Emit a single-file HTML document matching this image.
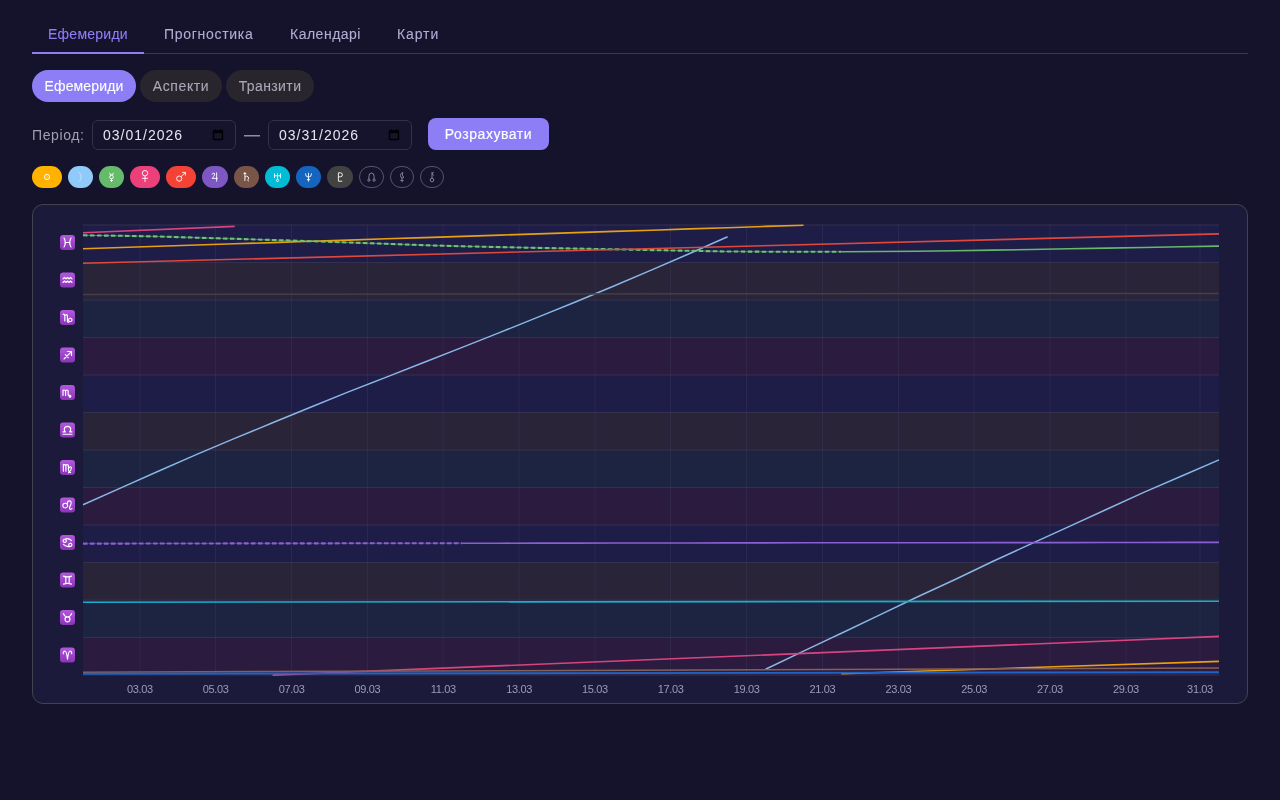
<!DOCTYPE html>
<html><head><meta charset="utf-8"><style>
html,body{margin:0;padding:0;background:#15132b;width:1280px;height:800px;overflow:hidden;font-family:"Liberation Sans",sans-serif;}
.a{position:absolute;white-space:nowrap;}
.tab,.pill,.a,.inp{will-change:transform}
.tab{position:absolute;top:26px;font-size:14px;line-height:16px;color:#b0aed2;white-space:nowrap;-webkit-text-stroke:0.1px currentColor}
.pill{position:absolute;top:70px;height:32px;border-radius:16px;font-size:14px;line-height:32px;text-align:center;color:#aaa8b6;background:#28252d;white-space:nowrap;-webkit-text-stroke:0.1px currentColor}
.inp{position:absolute;top:120px;width:142px;height:28px;border:1px solid #33304a;border-radius:6px;background:#16142d;}
.inp .t{position:absolute;left:10px;top:6px;font-size:14px;line-height:16px;color:#e6e4ee;letter-spacing:1px;white-space:nowrap}
.inp .cal{position:absolute;left:119px;top:7px;}
</style></head><body>
<div class="tab" style="left:48px;color:#8d7ef6;letter-spacing:0.25px">Ефемериди</div>
<div class="tab" style="left:164px;letter-spacing:0.7px">Прогностика</div>
<div class="tab" style="left:290px;letter-spacing:0.5px">Календарі</div>
<div class="tab" style="left:397px;letter-spacing:0.9px">Карти</div>
<div class="a" style="left:32px;top:53px;width:1216px;height:1px;background:#3b3950"></div>
<div class="a" style="left:32px;top:52px;width:112px;height:2px;background:#8d7ef6"></div>
<div class="pill" style="left:32px;width:104px;background:#8d7ef6;color:#fff;letter-spacing:0.15px">Ефемериди</div>
<div class="pill" style="left:140px;width:82px;letter-spacing:0.6px">Аспекти</div>
<div class="pill" style="left:226px;width:88px;letter-spacing:0.4px">Транзити</div>
<div class="a" style="left:32px;top:127px;font-size:14px;line-height:16px;color:#a29eb4;letter-spacing:0.6px">Період:</div>
<div class="inp" style="left:92px"><div class="t">03/01/2026</div><svg class="cal" width="12" height="13" viewBox="0 0 12 13"><rect x="1.5" y="3" width="9" height="8.5" rx="0.8" fill="none" stroke="#000" stroke-width="1.4"/><rect x="1" y="2.5" width="10" height="2.6" fill="#000"/><rect x="2.6" y="1" width="1.2" height="2.5" fill="#000"/><rect x="8.2" y="1" width="1.2" height="2.5" fill="#000"/></svg></div>
<div class="inp" style="left:268px"><div class="t">03/31/2026</div><svg class="cal" width="12" height="13" viewBox="0 0 12 13"><rect x="1.5" y="3" width="9" height="8.5" rx="0.8" fill="none" stroke="#000" stroke-width="1.4"/><rect x="1" y="2.5" width="10" height="2.6" fill="#000"/><rect x="2.6" y="1" width="1.2" height="2.5" fill="#000"/><rect x="8.2" y="1" width="1.2" height="2.5" fill="#000"/></svg></div>
<div class="a" style="left:428px;top:118px;width:121px;height:32px;border-radius:8px;background:#8d7ef6;color:#fff;font-size:14px;line-height:32px;text-align:center;letter-spacing:0.55px;-webkit-text-stroke:0.15px #fff">Розрахувати</div>
<div class="a" style="left:32px;top:204px;width:1214px;height:498px;border:1px solid #45424f;border-radius:11px;background:#1c1a3b"></div>
<svg width="1280" height="800" viewBox="0 0 1280 800" style="position:absolute;left:0;top:0;will-change:transform">
<defs><linearGradient id="zg" x1="0" y1="0" x2="0" y2="1"><stop offset="0" stop-color="#b258dc"/><stop offset="1" stop-color="#8a34b8"/></linearGradient></defs>
<rect x="32" y="166" width="30" height="22" rx="11" fill="#ffb300"/><g transform="translate(47.0,177)" stroke="#fff" stroke-width="0.9"><circle cx="0" cy="0" r="2.6" fill="none"/><circle cx="0" cy="0" r="0.6" fill="#fff" stroke="none"/></g><rect x="68" y="166" width="25" height="22" rx="11" fill="#90caf9"/><g transform="translate(80.5,177)" stroke="#fff" stroke-width="0.9"><path d="M-1.2,-4.6 Q2.6,0 -1.2,4.6" fill="none" stroke="#c8e2fb"/></g><rect x="99" y="166" width="25" height="22" rx="11" fill="#66bb6a"/><g transform="translate(111.5,177)" stroke="#fff" stroke-width="0.9"><circle cx="0" cy="0" r="1.8" fill="none"/><path d="M-1.9,-4.2 Q-1.7,-2.1 0,-2.1 Q1.7,-2.1 1.9,-4.2 M0,1.8 V5 M-1.4,3.5 H1.4" fill="none"/></g><rect x="130" y="166" width="30" height="22" rx="11" fill="#ec407a"/><g transform="translate(145.0,177)" stroke="#fff" stroke-width="0.9"><circle cx="0" cy="-3.8" r="2.7" fill="none"/><path d="M0,-1.1 V5 M-3,1.3 H3" fill="none"/></g><rect x="166" y="166" width="30" height="22" rx="11" fill="#f44336"/><g transform="translate(181.0,177)" stroke="#fff" stroke-width="0.9"><circle cx="-1.8" cy="1.6" r="2.6" fill="none"/><path d="M0.1,-0.3 L4.2,-4.4 M1.3,-4.6 H4.4 V-1.5" fill="none"/></g><rect x="202" y="166" width="26" height="22" rx="11" fill="#7e57c2"/><g transform="translate(215.0,177)" stroke="#fff" stroke-width="0.9"><path d="M-3,-2.4 Q-2.4,-4.6 -0.6,-3.6 Q0.6,-2.6 -2.8,1.4 H2.8 M1.6,-4.6 V4.6" fill="none"/></g><rect x="234" y="166" width="25" height="22" rx="11" fill="#795548"/><g transform="translate(246.5,177)" stroke="#fff" stroke-width="0.9"><path d="M-1.6,-5 V4 M-3,-3.4 H-0.2 M-1.6,0.2 Q0.3,-2 1.8,0 Q2.4,1 1.6,2.6 Q1.2,3.6 1.9,4.4" fill="none"/></g><rect x="265" y="166" width="25" height="22" rx="11" fill="#00bcd4"/><g transform="translate(277.5,177)" stroke="#fff" stroke-width="0.9"><path d="M-3,-3.6 V1.2 M3,-3.6 V1.2 M-3,-1.2 H3 M0,-3.6 V2.2" fill="none"/><circle cx="0" cy="3.4" r="1.1" fill="none"/></g><rect x="296" y="166" width="25" height="22" rx="11" fill="#1565c0"/><g transform="translate(308.5,177)" stroke="#fff" stroke-width="0.9"><path d="M-3,-3.6 Q-3,0.2 0,0.2 Q3,0.2 3,-3.6 M0,-4.2 V4.6 M-1.6,2.6 H1.6" fill="none"/></g><rect x="327" y="166" width="26" height="22" rx="11" fill="#424242"/><g transform="translate(340.0,177)" stroke="#fff" stroke-width="0.9"><path d="M-1.6,-4.2 V4.2 H2.2 M-1.6,-4.2 H0.4 Q2.4,-4.2 2.4,-2.2 Q2.4,-0.2 0.4,-0.2 H-1.6" fill="none"/></g><rect x="359.5" y="166.5" width="24" height="21" rx="10.5" fill="none" stroke="#57536c" stroke-width="1"/><g transform="translate(371.5,177)" stroke="#8e8aa4" stroke-width="0.9"><path d="M-2.6,2.3 V-0.4 Q-2.7,-4 0,-4 Q2.7,-4 2.6,-0.4 V2.3" fill="none"/><circle cx="-2.6" cy="3.2" r="1.1" fill="none"/><circle cx="2.6" cy="3.2" r="1.1" fill="none"/></g><rect x="390.5" y="166.5" width="23" height="21" rx="10.5" fill="none" stroke="#57536c" stroke-width="1"/><g transform="translate(402.0,177)" stroke="#8e8aa4" stroke-width="0.9"><path d="M1.2,-4.6 Q-2.8,-3.4 -1,0.4 Q0.8,1.6 2,0.2 Q-0.6,-0.4 0.6,-4.2 M0,1 V5.2 M-1.6,3.4 H1.6" fill="none"/></g><rect x="420.5" y="166.5" width="23" height="21" rx="10.5" fill="none" stroke="#57536c" stroke-width="1"/><g transform="translate(432.0,177)" stroke="#8e8aa4" stroke-width="0.9"><path d="M0,-5 V1.2 M0,-3.4 L1.8,-4.8 M0,-3.2 L1.8,-1.6" fill="none"/><circle cx="0" cy="3" r="1.8" fill="none"/></g>
<rect x="83.0" y="225.0" width="1136.0" height="37.5" fill="#1e1d48"/><rect x="83.0" y="262.5" width="1136.0" height="37.5" fill="#2a2438"/><rect x="83.0" y="300.0" width="1136.0" height="37.5" fill="#1c2441"/><rect x="83.0" y="337.5" width="1136.0" height="37.5" fill="#2b1b3e"/><rect x="83.0" y="375.0" width="1136.0" height="37.5" fill="#1e1d48"/><rect x="83.0" y="412.5" width="1136.0" height="37.5" fill="#2a2438"/><rect x="83.0" y="450.0" width="1136.0" height="37.5" fill="#1c2441"/><rect x="83.0" y="487.5" width="1136.0" height="37.5" fill="#2b1b3e"/><rect x="83.0" y="525.0" width="1136.0" height="37.5" fill="#1e1d48"/><rect x="83.0" y="562.5" width="1136.0" height="37.5" fill="#2a2438"/><rect x="83.0" y="600.0" width="1136.0" height="37.5" fill="#1c2441"/><rect x="83.0" y="637.5" width="1136.0" height="37.5" fill="#2b1b3e"/>
<line x1="83.0" x2="1219.0" y1="225.0" y2="225.0" stroke="#34314f" stroke-width="1"/><line x1="83.0" x2="1219.0" y1="262.5" y2="262.5" stroke="#34314f" stroke-width="1"/><line x1="83.0" x2="1219.0" y1="300.0" y2="300.0" stroke="#34314f" stroke-width="1"/><line x1="83.0" x2="1219.0" y1="337.5" y2="337.5" stroke="#34314f" stroke-width="1"/><line x1="83.0" x2="1219.0" y1="375.0" y2="375.0" stroke="#34314f" stroke-width="1"/><line x1="83.0" x2="1219.0" y1="412.5" y2="412.5" stroke="#34314f" stroke-width="1"/><line x1="83.0" x2="1219.0" y1="450.0" y2="450.0" stroke="#34314f" stroke-width="1"/><line x1="83.0" x2="1219.0" y1="487.5" y2="487.5" stroke="#34314f" stroke-width="1"/><line x1="83.0" x2="1219.0" y1="525.0" y2="525.0" stroke="#34314f" stroke-width="1"/><line x1="83.0" x2="1219.0" y1="562.5" y2="562.5" stroke="#34314f" stroke-width="1"/><line x1="83.0" x2="1219.0" y1="600.0" y2="600.0" stroke="#34314f" stroke-width="1"/><line x1="83.0" x2="1219.0" y1="637.5" y2="637.5" stroke="#34314f" stroke-width="1"/><line x1="83.0" x2="1219.0" y1="675.0" y2="675.0" stroke="#34314f" stroke-width="1"/><line x1="140.0" x2="140.0" y1="225.0" y2="675.0" stroke="#3a3858" stroke-width="1" stroke-opacity="0.45"/><line x1="215.5" x2="215.5" y1="225.0" y2="675.0" stroke="#3a3858" stroke-width="1" stroke-opacity="0.45"/><line x1="291.5" x2="291.5" y1="225.0" y2="675.0" stroke="#3a3858" stroke-width="1" stroke-opacity="0.45"/><line x1="367.5" x2="367.5" y1="225.0" y2="675.0" stroke="#3a3858" stroke-width="1" stroke-opacity="0.45"/><line x1="443.0" x2="443.0" y1="225.0" y2="675.0" stroke="#3a3858" stroke-width="1" stroke-opacity="0.45"/><line x1="519.0" x2="519.0" y1="225.0" y2="675.0" stroke="#3a3858" stroke-width="1" stroke-opacity="0.45"/><line x1="595.0" x2="595.0" y1="225.0" y2="675.0" stroke="#3a3858" stroke-width="1" stroke-opacity="0.45"/><line x1="670.5" x2="670.5" y1="225.0" y2="675.0" stroke="#3a3858" stroke-width="1" stroke-opacity="0.45"/><line x1="746.5" x2="746.5" y1="225.0" y2="675.0" stroke="#3a3858" stroke-width="1" stroke-opacity="0.45"/><line x1="822.5" x2="822.5" y1="225.0" y2="675.0" stroke="#3a3858" stroke-width="1" stroke-opacity="0.45"/><line x1="898.5" x2="898.5" y1="225.0" y2="675.0" stroke="#3a3858" stroke-width="1" stroke-opacity="0.45"/><line x1="974.0" x2="974.0" y1="225.0" y2="675.0" stroke="#3a3858" stroke-width="1" stroke-opacity="0.45"/><line x1="1050.0" x2="1050.0" y1="225.0" y2="675.0" stroke="#3a3858" stroke-width="1" stroke-opacity="0.45"/><line x1="1126.0" x2="1126.0" y1="225.0" y2="675.0" stroke="#3a3858" stroke-width="1" stroke-opacity="0.45"/><line x1="1200.0" x2="1200.0" y1="225.0" y2="675.0" stroke="#3a3858" stroke-width="1" stroke-opacity="0.45"/>
<polyline points="83.0,248.8 120.9,247.5 158.8,246.3 196.8,245.0 234.7,243.8 272.6,242.6 310.5,241.3 348.4,240.1 386.4,238.8 424.3,237.6 462.2,236.4 500.1,235.1 538.0,233.9 576.0,232.6 613.9,231.4 651.8,230.2 689.7,228.9 727.6,227.7 765.5,226.4 803.5,225.2" fill="none" stroke="#e8a012" stroke-width="1.6" stroke-opacity="1" stroke-linejoin="round"/><polyline points="841.4,673.7 1219.0,661.4" fill="none" stroke="#e8a012" stroke-width="1.6" stroke-opacity="1" stroke-linejoin="round"/><polyline points="83.0,504.8 120.9,487.9 158.8,471.0 196.8,454.4 234.7,438.4 272.6,422.8 310.5,407.2 348.4,391.9 386.4,377.1 424.3,362.2 462.2,347.4 500.1,332.4 538.0,317.1 576.0,301.7 613.9,286.0 651.8,269.9 689.7,253.5 727.6,236.8" fill="none" stroke="#88b6e6" stroke-width="1.5" stroke-opacity="1" stroke-linejoin="round"/><polyline points="765.5,669.3 803.5,651.1 841.4,633.2 879.3,615.1 917.2,597.0 955.1,579.5 993.1,561.3 1031.0,543.9 1068.9,526.6 1106.8,509.3 1143.2,492.6 1181.1,476.3 1219.0,459.9" fill="none" stroke="#88b6e6" stroke-width="1.5" stroke-opacity="1" stroke-linejoin="round"/><polyline points="83.0,235.3 120.9,235.8 158.8,236.5 196.8,237.7 234.7,238.8 272.6,240.0 310.5,241.2 348.4,242.5 386.4,243.8 424.3,245.2 462.2,246.3 500.1,247.1 538.0,247.9 576.0,248.6 613.9,249.3 651.8,250.1 689.7,250.8 727.6,251.5 765.5,251.7 803.5,251.7 841.4,251.7" fill="none" stroke="#6cc46f" stroke-width="0.9" stroke-opacity="0.6" stroke-linejoin="round"/><polyline points="83.0,235.3 120.9,235.8 158.8,236.5 196.8,237.7 234.7,238.8 272.6,240.0 310.5,241.2 348.4,242.5 386.4,243.8 424.3,245.2 462.2,246.3 500.1,247.1 538.0,247.9 576.0,248.6 613.9,249.3 651.8,250.1 689.7,250.8 727.6,251.5 765.5,251.7 803.5,251.7 841.4,251.7" fill="none" stroke="#6cc46f" stroke-width="2.1" stroke-opacity="1" stroke-linejoin="round" stroke-dasharray="4.5 2.5"/><polyline points="841.4,251.7 879.3,251.5 917.2,251.3 955.1,250.8 993.1,250.1 1031.0,249.5 1068.9,248.8 1106.8,248.1 1143.2,247.5 1181.1,246.8 1219.0,246.1" fill="none" stroke="#66b86a" stroke-width="1.6" stroke-opacity="1" stroke-linejoin="round"/><polyline points="83.0,232.7 234.7,226.4" fill="none" stroke="#d84482" stroke-width="1.6" stroke-opacity="1" stroke-linejoin="round"/><polyline points="272.6,675.1 1219.0,636.4" fill="none" stroke="#d84482" stroke-width="1.6" stroke-opacity="1" stroke-linejoin="round"/><polyline points="83.0,263.3 1219.0,233.9" fill="none" stroke="#e0483c" stroke-width="1.6" stroke-opacity="1" stroke-linejoin="round"/><polyline points="83.0,543.6 120.9,543.6 158.8,543.5 196.8,543.5 234.7,543.4 272.6,543.4 310.5,543.4 348.4,543.3 386.4,543.3 424.3,543.2 462.2,543.2" fill="none" stroke="#8a5fd0" stroke-width="0.9" stroke-opacity="0.6" stroke-linejoin="round"/><polyline points="83.0,543.6 120.9,543.6 158.8,543.5 196.8,543.5 234.7,543.4 272.6,543.4 310.5,543.4 348.4,543.3 386.4,543.3 424.3,543.2 462.2,543.2" fill="none" stroke="#8a5fd0" stroke-width="2.1" stroke-opacity="1" stroke-linejoin="round" stroke-dasharray="4.5 2.5"/><polyline points="462.2,543.2 500.1,543.2 538.0,543.1 576.0,543.1 613.9,543.0 651.8,543.0 689.7,543.0 727.6,542.9 765.5,542.9 803.5,542.8 841.4,542.8 879.3,542.8 917.2,542.7 955.1,542.7 993.1,542.6 1031.0,542.6 1068.9,542.6 1106.8,542.5 1143.2,542.5 1181.1,542.4 1219.0,542.4" fill="none" stroke="#8a5fd0" stroke-width="1.6" stroke-opacity="1" stroke-linejoin="round"/><polyline points="83.0,672.2 1219.0,668.1" fill="none" stroke="#84605a" stroke-width="1.5" stroke-opacity="1" stroke-linejoin="round"/><polyline points="83.0,602.2 1219.0,601.2" fill="none" stroke="#18b0c8" stroke-width="1.6" stroke-opacity="1" stroke-linejoin="round"/><polyline points="83.0,673.8 1219.0,672.3" fill="none" stroke="#1f64c4" stroke-width="1.9" stroke-opacity="1" stroke-linejoin="round"/><polyline points="83.0,294.4 1219.0,293.4" fill="none" stroke="#433e4a" stroke-width="1.5" stroke-opacity="1" stroke-linejoin="round"/>
<g font-family="Liberation Sans" font-size="11" fill="#9d9ab8" letter-spacing="-0.35"><text x="139.9" y="693" text-anchor="middle">03.03</text><text x="215.7" y="693" text-anchor="middle">05.03</text><text x="291.6" y="693" text-anchor="middle">07.03</text><text x="367.4" y="693" text-anchor="middle">09.03</text><text x="443.2" y="693" text-anchor="middle">11.03</text><text x="519.1" y="693" text-anchor="middle">13.03</text><text x="594.9" y="693" text-anchor="middle">15.03</text><text x="670.7" y="693" text-anchor="middle">17.03</text><text x="746.6" y="693" text-anchor="middle">19.03</text><text x="822.4" y="693" text-anchor="middle">21.03</text><text x="898.3" y="693" text-anchor="middle">23.03</text><text x="974.1" y="693" text-anchor="middle">25.03</text><text x="1049.9" y="693" text-anchor="middle">27.03</text><text x="1125.8" y="693" text-anchor="middle">29.03</text><text x="1200.0" y="693" text-anchor="middle">31.03</text></g>
<g transform="translate(60,235.00)"><rect x="0" y="0" width="15" height="15" rx="3.2" fill="url(#zg)"/><path d="M4,3 Q6.6,7.5 4,12 M11,3 Q8.4,7.5 11,12 M5,7.5 H10" fill="none" stroke="#fff" stroke-width="1.15" stroke-linecap="round" stroke-linejoin="round"/></g><g transform="translate(60,272.50)"><rect x="0" y="0" width="15" height="15" rx="3.2" fill="url(#zg)"/><path d="M3,6.3 L4.5,4.8 L6,6.3 L7.5,4.8 L9,6.3 L10.5,4.8 L12,6.3 M3,10 L4.5,8.5 L6,10 L7.5,8.5 L9,10 L10.5,8.5 L12,10" fill="none" stroke="#fff" stroke-width="1.15" stroke-linecap="round" stroke-linejoin="round"/></g><g transform="translate(60,310.00)"><rect x="0" y="0" width="15" height="15" rx="3.2" fill="url(#zg)"/><path d="M3.2,4.2 Q4.6,4 4.8,5.8 V11 M4.8,6 Q6,3.6 7.4,5.6 V11 Q7.6,12.6 9,12 M10.3,8.2 A1.7,1.7 0 1,1 10.29,8.2" fill="none" stroke="#fff" stroke-width="1.15" stroke-linecap="round" stroke-linejoin="round"/></g><g transform="translate(60,347.50)"><rect x="0" y="0" width="15" height="15" rx="3.2" fill="url(#zg)"/><path d="M4,11.5 L11.2,4.3 M7.6,4 H11.5 V7.9 M5.3,7.2 L8.3,10.2" fill="none" stroke="#fff" stroke-width="1.15" stroke-linecap="round" stroke-linejoin="round"/></g><g transform="translate(60,385.00)"><rect x="0" y="0" width="15" height="15" rx="3.2" fill="url(#zg)"/><path d="M3,5 V10.5 M3,6 Q4.3,4 5.6,6 V10.5 M5.6,6 Q6.9,4 8.2,6 V10 Q8.4,11.6 10.6,11.2 M9.6,10 L11,11.2 L9.8,12.5" fill="none" stroke="#fff" stroke-width="1.15" stroke-linecap="round" stroke-linejoin="round"/></g><g transform="translate(60,422.50)"><rect x="0" y="0" width="15" height="15" rx="3.2" fill="url(#zg)"/><path d="M3,9.4 H5.4 Q3.9,8 4.3,6.2 Q4.9,3.9 7.5,3.9 Q10.1,3.9 10.7,6.2 Q11.1,8 9.6,9.4 H12 M3,11.7 H12" fill="none" stroke="#fff" stroke-width="1.15" stroke-linecap="round" stroke-linejoin="round"/></g><g transform="translate(60,460.00)"><rect x="0" y="0" width="15" height="15" rx="3.2" fill="url(#zg)"/><path d="M3.4,4.4 V11.2 M3.4,5.4 Q4.6,3.8 5.9,5.4 V11.2 M5.9,5.4 Q7.1,3.8 8.4,5.4 V9.6 Q8.6,12 10.6,12.6 M8.4,8.8 Q10.6,5.4 11.4,7.6 Q11.6,10.4 8.6,12.8" fill="none" stroke="#fff" stroke-width="1.15" stroke-linecap="round" stroke-linejoin="round"/></g><g transform="translate(60,497.50)"><rect x="0" y="0" width="15" height="15" rx="3.2" fill="url(#zg)"/><path d="M5.2,5.7 A2.4,2.4 0 1,0 5.21,5.7 M7.3,7 Q7.2,3.3 9.4,3.3 Q11.6,3.4 11,6.4 Q10.5,8.2 9.6,9.6 Q9.2,11.6 10.6,11.8 Q11.4,11.8 12,11.2" fill="none" stroke="#fff" stroke-width="1.15" stroke-linecap="round" stroke-linejoin="round"/></g><g transform="translate(60,535.00)"><rect x="0" y="0" width="15" height="15" rx="3.2" fill="url(#zg)"/><path d="M4.7,4.2 A1.6,1.6 0 1,0 4.71,4.2 M4.7,4.2 Q8.4,2.6 11.6,5.6 M10.3,8.2 A1.6,1.6 0 1,0 10.31,8.2 M10.3,11.4 Q6.6,12.4 3.4,9.4" fill="none" stroke="#fff" stroke-width="1.15" stroke-linecap="round" stroke-linejoin="round"/></g><g transform="translate(60,572.50)"><rect x="0" y="0" width="15" height="15" rx="3.2" fill="url(#zg)"/><path d="M3.5,3.6 Q7.5,5.2 11.5,3.6 M3.5,11.6 Q7.5,10 11.5,11.6 M5.8,4.4 V10.8 M9.2,4.4 V10.8" fill="none" stroke="#fff" stroke-width="1.15" stroke-linecap="round" stroke-linejoin="round"/></g><g transform="translate(60,610.00)"><rect x="0" y="0" width="15" height="15" rx="3.2" fill="url(#zg)"/><path d="M7.5,6.8 A2.5,2.5 0 1,0 7.5,11.8 A2.5,2.5 0 1,0 7.5,6.8 M3.4,3.6 Q4.6,6.8 7.5,6.8 Q10.4,6.8 11.6,3.6" fill="none" stroke="#fff" stroke-width="1.15" stroke-linecap="round" stroke-linejoin="round"/></g><g transform="translate(60,647.50)"><rect x="0" y="0" width="15" height="15" rx="3.2" fill="url(#zg)"/><path d="M3.3,6.2 Q3.3,3.5 5,3.5 Q6.5,3.7 7.5,11.6 Q8.5,3.7 10,3.5 Q11.7,3.5 11.7,6.2" fill="none" stroke="#fff" stroke-width="1.15" stroke-linecap="round" stroke-linejoin="round"/></g>
<rect x="244" y="135" width="16" height="1.5" fill="#8f8ba4"/>
</svg>
</body></html>
